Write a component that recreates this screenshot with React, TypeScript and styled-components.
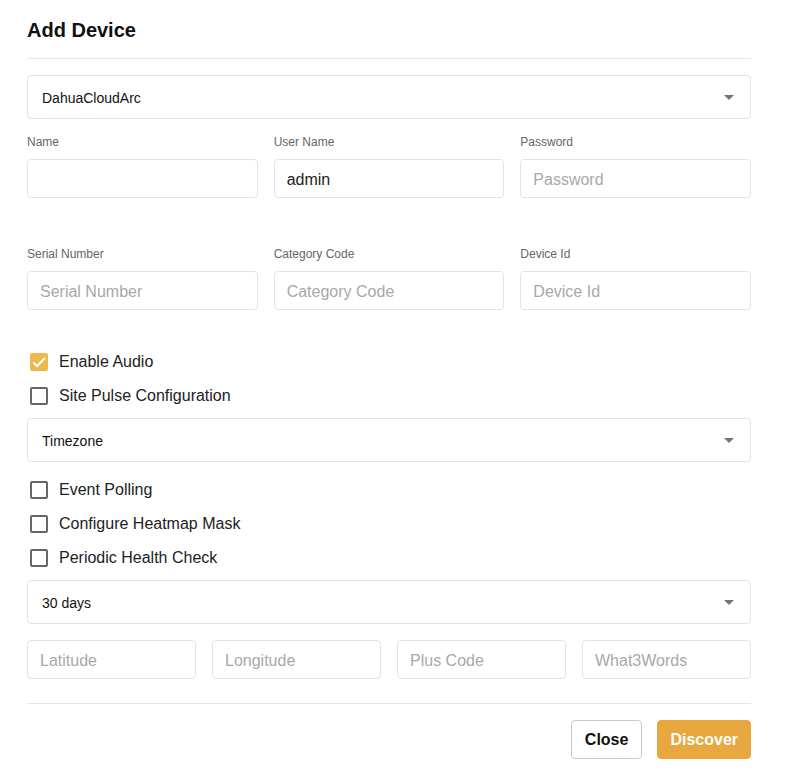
import React, { useState } from "react"
import styled, { createGlobalStyle } from "styled-components"

const GlobalStyle = createGlobalStyle`
  body {
    margin: 0;
    background: #fff;
    font-family: "Liberation Sans", Arial, sans-serif;
    color: #222;
  }
  * { box-sizing: border-box; }
`

const Dialog = styled.div`
  width: 785px;
  padding: 18px 34px 0 27px;
`

const Title = styled.h2`
  margin: 0;
  font-size: 20px;
  line-height: 24px;
  font-weight: 700;
  color: #111;
`

const Divider = styled.hr<{ $top: number; $bottom: number }>`
  border: 0;
  border-top: 1px solid #e6e6e6;
  margin: ${(p) => p.$top}px 0 ${(p) => p.$bottom}px;
`

const SelectBox = styled.div<{ $top?: number }>`
  height: 44px;
  margin-top: ${(p) => p.$top ?? 0}px;
  border: 1px solid #e3e3e3;
  border-radius: 4px;
  display: flex;
  align-items: center;
  padding: 1px 14px 0;
  font-size: 14px;
  color: #111;
`

const Caret = styled.span`
  margin-left: auto;
  margin-right: 2px;
  width: 0;
  height: 0;
  border-left: 5px solid transparent;
  border-right: 5px solid transparent;
  border-top: 5px solid #757575;
`

const Grid = styled.div<{ $cols: number; $top: number }>`
  display: grid;
  grid-template-columns: repeat(${(p) => p.$cols}, 1fr);
  column-gap: 16px;
  margin-top: ${(p) => p.$top}px;
`

const Field = styled.div`
  display: flex;
  flex-direction: column;
`

const Label = styled.label`
  font-size: 12px;
  line-height: 14px;
  padding-top: 1px;
  color: #666;
  margin-bottom: 10px;
`

const Input = styled.input`
  height: 39px;
  width: 100%;
  border: 1px solid #e3e3e3;
  border-radius: 4px;
  padding: 2px 12px 0;
  font-family: "Liberation Sans", Arial, sans-serif;
  font-size: 16px;
  color: #222;
  outline: none;
  &::placeholder {
    color: #a8a8a8;
  }
`

const CheckRow = styled.label<{ $top?: number }>`
  display: flex;
  align-items: center;
  height: 34px;
  margin-top: ${(p) => p.$top ?? 0}px;
  padding: 1px 0 0 3px;
  font-size: 16px;
  color: #222;
  cursor: pointer;
`

const Box = styled.span<{ $checked: boolean }>`
  width: 18px;
  height: 18px;
  border-radius: 2px;
  margin-right: 11px;
  display: flex;
  align-items: center;
  justify-content: center;
  background: ${(p) => (p.$checked ? "#ebb94e" : "#fff")};
  border: ${(p) => (p.$checked ? "none" : "2px solid #666")};
`

const Footer = styled.div`
  display: flex;
  justify-content: flex-end;
  gap: 15px;
`

const Button = styled.button<{ $primary?: boolean }>`
  height: 39px;
  padding: 1px ${(p) => (p.$primary ? 12 : 13)}px 0;
  border-radius: 4px;
  font-family: "Liberation Sans", Arial, sans-serif;
  font-size: 16px;
  font-weight: 700;
  cursor: pointer;
  border: ${(p) => (p.$primary ? "1px solid #e8a73f" : "1px solid #c8c8c8")};
  background: ${(p) => (p.$primary ? "#e8a73f" : "#fff")};
  color: ${(p) => (p.$primary ? "#fff" : "#111")};
`

const Check = ({ label, checked, top, onToggle }: { label: string; checked: boolean; top?: number; onToggle: () => void }) => (
  <CheckRow $top={top} onClick={onToggle}>
    <Box $checked={checked}>
      {checked && (
        <svg width="16" height="16" viewBox="0 0 24 24">
          <path d="M3.5 12.5l5.5 5.5L21 6" fill="none" stroke="#fff" strokeWidth="3" />
        </svg>
      )}
    </Box>
    {label}
  </CheckRow>
)

const App = () => {
  const [checks, setChecks] = useState<Record<string, boolean>>({
    audio: true,
    pulse: false,
    polling: false,
    heatmap: false,
    health: false
  })
  const toggle = (k: string) => setChecks((c) => ({ ...c, [k]: !c[k] }))

  return (
    <>
      <GlobalStyle />
      <Dialog>
        <Title>Add Device</Title>
        <Divider $top={16} $bottom={16} />
        <SelectBox>
          DahuaCloudArc
          <Caret />
        </SelectBox>

        <Grid $cols={3} $top={15}>
          <Field>
            <Label>Name</Label>
            <Input />
          </Field>
          <Field>
            <Label>User Name</Label>
            <Input defaultValue="admin" />
          </Field>
          <Field>
            <Label>Password</Label>
            <Input type="password" placeholder="Password" />
          </Field>
        </Grid>

        <Grid $cols={3} $top={48}>
          <Field>
            <Label>Serial Number</Label>
            <Input placeholder="Serial Number" />
          </Field>
          <Field>
            <Label>Category Code</Label>
            <Input placeholder="Category Code" />
          </Field>
          <Field>
            <Label>Device Id</Label>
            <Input placeholder="Device Id" />
          </Field>
        </Grid>

        <Check label="Enable Audio" checked={checks.audio} top={34} onToggle={() => toggle("audio")} />
        <Check label="Site Pulse Configuration" checked={checks.pulse} onToggle={() => toggle("pulse")} />

        <SelectBox $top={6}>
          Timezone
          <Caret />
        </SelectBox>

        <Check label="Event Polling" checked={checks.polling} top={10} onToggle={() => toggle("polling")} />
        <Check label="Configure Heatmap Mask" checked={checks.heatmap} onToggle={() => toggle("heatmap")} />
        <Check label="Periodic Health Check" checked={checks.health} onToggle={() => toggle("health")} />

        <SelectBox $top={6}>
          30 days
          <Caret />
        </SelectBox>

        <Grid $cols={4} $top={16}>
          <Input placeholder="Latitude" />
          <Input placeholder="Longitude" />
          <Input placeholder="Plus Code" />
          <Input placeholder="What3Words" />
        </Grid>

        <Divider $top={24} $bottom={16} />

        <Footer>
          <Button>Close</Button>
          <Button $primary>Discover</Button>
        </Footer>
      </Dialog>
    </>
  )
}

export default App
